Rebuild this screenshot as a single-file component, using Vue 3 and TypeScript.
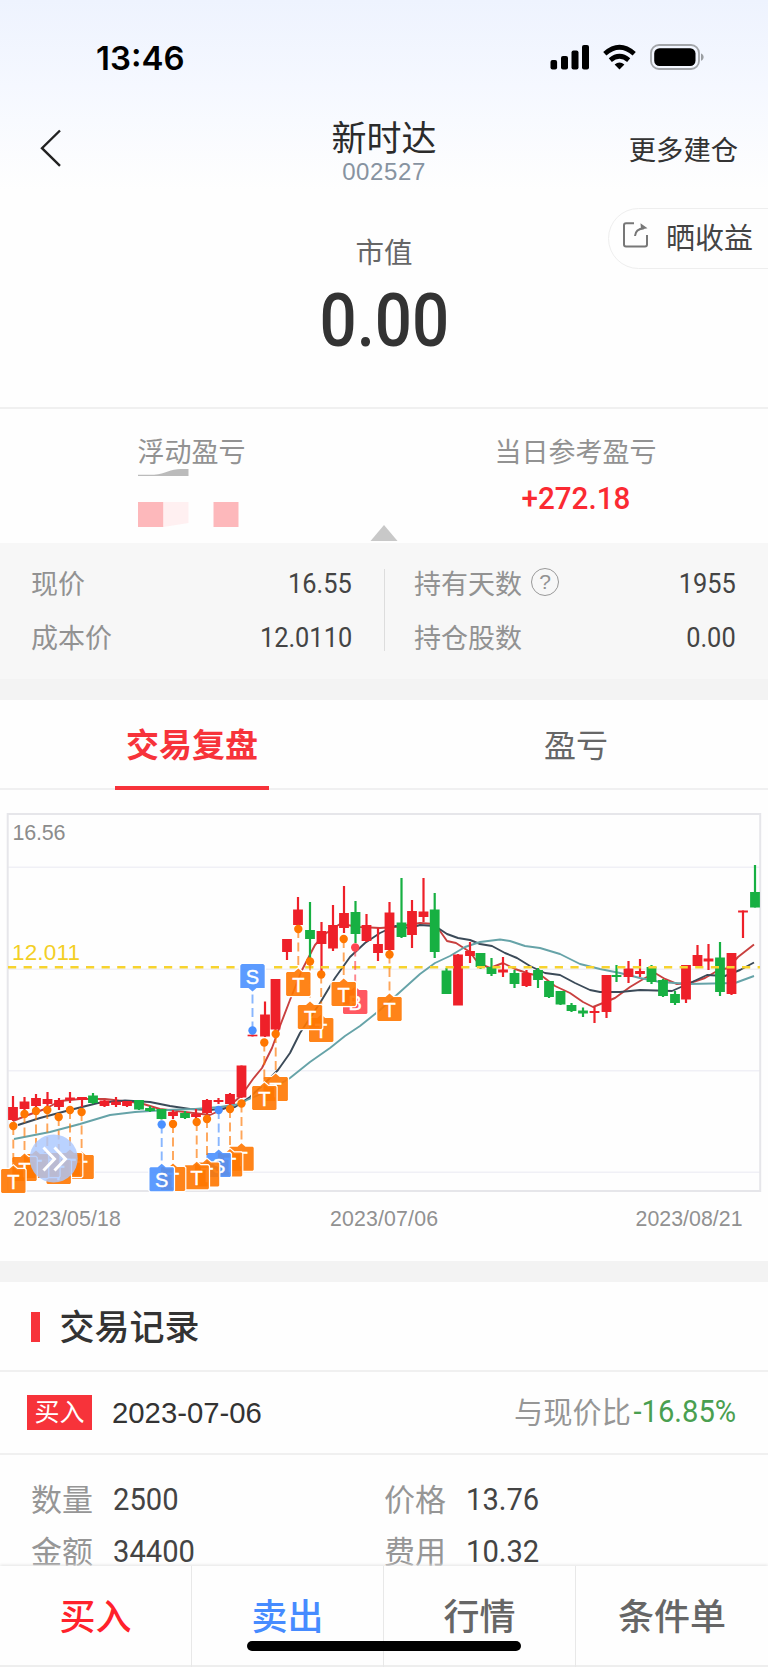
<script setup lang="ts">
type Candle = [x: number, high: number, low: number, top: number, bottom: number, up: 0 | 1]
interface Marker {
  x: number
  dot: number
  box: number
  kind: 'T' | 'S' | 'B'
  above?: boolean
}

const candles: Candle[] = [
  [13, 1096, 1121, 1107, 1120, 1], [24.5, 1097, 1110, 1101.5, 1109, 1], [36, 1094, 1107, 1098, 1106, 1],
  [47.5, 1092, 1107, 1099, 1104, 1], [59, 1098, 1110, 1100, 1107, 1], [70, 1092, 1103, 1097.5, 1100, 1],
  [82, 1097, 1107, 1097, 1100, 1], [93, 1093, 1104, 1095.5, 1103, 0], [104.5, 1100, 1107, 1100.5, 1106, 1],
  [116, 1097, 1107, 1101.5, 1105, 1], [127, 1101, 1107, 1101, 1106, 1], [139, 1100, 1110, 1100, 1109.5, 0],
  [150, 1106, 1112, 1108, 1111, 0], [161.5, 1109, 1119.5, 1109, 1119, 0], [173, 1110, 1119, 1112, 1116, 1],
  [185, 1111, 1119, 1113, 1118, 0], [196, 1109, 1118, 1114, 1117, 1], [207, 1099, 1114, 1100, 1113, 1],
  [218.5, 1098, 1104, 1100, 1102, 1], [230, 1093, 1105, 1094, 1104, 1], [241.5, 1065.5, 1098, 1065.5, 1097.5, 1],
  [252.5, 1034.5, 1036.5, 1034.7, 1036.3, 1], [265, 1001.5, 1037, 1014.5, 1036.5, 1], [275.5, 979, 1030, 979, 1029.5, 1],
  [287, 939, 960, 939, 952, 1], [298, 897, 926, 909.5, 925, 1], [310, 902, 960, 930, 939, 0],
  [321.5, 922, 975, 931, 944, 1], [333, 905, 951, 925, 948.5, 1], [344, 886, 933, 913, 928, 1],
  [355.5, 901, 943, 912, 934, 0], [366.5, 914, 942, 925, 941, 1], [378, 928, 961, 944, 953, 1],
  [389.5, 902, 951, 912.5, 950, 1], [401.5, 878, 938, 922.5, 937, 0], [412, 900, 948, 911, 935, 1],
  [423.5, 878, 922, 911.5, 917, 1], [434.7, 893, 958, 909.5, 952, 0], [446.5, 968, 994, 970.5, 994, 0],
  [458, 954, 1005, 954.5, 1005.5, 1], [470, 942, 963, 951, 956, 1], [480.5, 953, 969, 953, 967, 0],
  [491.5, 958, 976, 967, 974, 0], [503, 957, 977, 969.5, 972.5, 1], [514.5, 970, 988, 973, 984, 0],
  [526.5, 970, 987, 973, 986, 1], [538, 968, 988, 970, 980, 0], [549, 981, 998, 981, 997, 0],
  [560.5, 991, 1005, 991, 1004.5, 0], [571.5, 1003, 1012, 1005, 1011, 0], [583, 1007.5, 1017, 1010.5, 1013.5, 0],
  [594.5, 1007, 1023, 1011, 1013, 1], [606.5, 975, 1018, 975, 1012, 1], [616.5, 965, 982, 975, 977, 0],
  [628.5, 961, 983, 968.5, 977, 1], [640, 959, 977, 971, 974, 1], [651.5, 965, 984, 967, 982, 0],
  [663, 979, 997, 980, 996, 0], [675, 991, 1005, 994, 1003, 0], [686, 965, 1003, 965, 999.5, 1],
  [697.5, 945, 966, 955, 966, 1], [708.5, 944, 970, 958.5, 961.5, 1], [720, 942, 996, 957.5, 992, 0],
  [731.5, 953, 995, 953, 994, 1], [743, 910.5, 938, 910.5, 912.5, 1], [755, 865, 907.5, 892, 907.5, 0],
]

// Right-most markers are painted first, so each one overlaps its right neighbour.
const markers: Marker[] = [
  { x: 389.5, dot: 954.5, box: 1009, kind: 'T' },
  { x: 355.2, dot: 947.5, box: 1002, kind: 'B' },
  { x: 343.7, dot: 939, box: 994, kind: 'T' },
  { x: 321.2, dot: 974.5, box: 1030, kind: 'T' },
  { x: 310, dot: 961.5, box: 1017, kind: 'T' },
  { x: 298.3, dot: 929, box: 984, kind: 'T' },
  { x: 275.7, dot: 1034, box: 1089, kind: 'T' },
  { x: 264.3, dot: 1042.5, box: 1098, kind: 'T' },
  { x: 252.5, dot: 1030.5, box: 976, kind: 'S', above: true },
  { x: 241.5, dot: 1103.5, box: 1158.7, kind: 'T' },
  { x: 230, dot: 1109, box: 1164.5, kind: 'T' },
  { x: 218.7, dot: 1110, box: 1165, kind: 'S' },
  { x: 207, dot: 1119, box: 1174.5, kind: 'T' },
  { x: 196.7, dot: 1122, box: 1177.3, kind: 'T' },
  { x: 173, dot: 1124, box: 1179, kind: 'T' },
  { x: 161.7, dot: 1124.5, box: 1179.3, kind: 'S' },
  { x: 81.6, dot: 1112, box: 1167, kind: 'T' },
  { x: 70, dot: 1110, box: 1165, kind: 'T' },
  { x: 58.7, dot: 1117, box: 1172, kind: 'T' },
  { x: 47.3, dot: 1110, box: 1165, kind: 'T' },
  { x: 36, dot: 1111, box: 1166, kind: 'T' },
  { x: 24.5, dot: 1114, box: 1169, kind: 'T' },
  { x: 13.3, dot: 1126, box: 1181, kind: 'T' },
]

const colors = { T: '#ff7700', S: '#4a90ff', B: '#ff4650' }

const averages = [
  {
    color: '#c8403f',
    points:
      '13,1121 28,1115 45,1109 60,1101 80,1099 105,1099 140,1103 160,1109 185,1112 210,1115 228,1107 241,1096 253,1079 262,1068 272,1048 280,1026 290,1000 302,970 315,945 325,934 340,924 360,927 380,928 395,927 420,923 435,924 440,931 447,941 456,943 470,952 478,963 490,968 503,963 515,969 530,974 542,976 555,986 570,993 583,1002 593,1007 603,1003 615,998 630,987 645,978 655,973 665,979 677,984 690,983 705,978 717,971 728,968 738,957 754,944.5',
  },
  {
    color: '#3b4a58',
    points:
      '18,1125 40,1118 70,1110 98,1103 125,1100.5 150,1102 170,1106 190,1109 210,1110 235,1107 250,1097 265,1083 278,1070 290,1053 300,1033 320,1003 335,978 350,957 365,943 380,933 395,926 410,928 420,925 435,926 447,934 458,938 470,940 480,944 492,946 505,953 517,958 530,966 545,973 560,975 575,983 590,990 600,992 620,992 640,990 672,991 690,983 707,975 725,976 740,970 754,962.5',
  },
  {
    color: '#66a3a8',
    points:
      '14,1139 50,1132 80,1124 110,1115 135,1112 165,1110 195,1109 220,1107 240,1104 247,1100 270,1090 290,1078 310,1062 330,1048 345,1036 360,1026 380,1010 400,992 420,974 435,963 450,956 465,947 480,942 500,939.5 510,941 525,946 540,948 560,954 580,964 600,969 620,973 640,978 660,982 690,984 735,983 754,976',
  },
]

const boxPath = (m: Marker): string => {
  const l = m.x - 12.2, r = m.x + 12.2, t = m.box - 12, b = m.box + 12
  return m.above
    ? `M${l + 1.5} ${t}H${r - 1.5}L${r} ${t + 1.5}V${b}H${m.x + 4}L${m.x} ${b + 3.5}L${m.x - 4} ${b}H${l}V${t + 1.5}Z`
    : `M${l + 1} ${t}H${m.x - 4}L${m.x} ${t - 3.5}L${m.x + 4} ${t}H${r - 1}L${r} ${t + 1}V${b - 1}L${r - 1} ${b}H${l + 1}L${l} ${b - 1}V${t + 1}Z`
}

const left = [['现价', '16.55'], ['成本价', '12.0110']]
const right = [['持有天数', '1955'], ['持仓股数', '0.00']]
const details = [['数量', '2500'], ['价格', '13.76'], ['金额', '34400'], ['费用', '10.32']]
const actions = [
  { label: '买入', tone: 'buy' },
  { label: '卖出', tone: 'sell' },
  { label: '行情', tone: '' },
  { label: '条件单', tone: '' },
]
</script>

<template>
  <div class="screen">
    <div class="top">
      <div class="status">
        <span class="time">13:46</span>
        <svg class="status-icons" width="156" height="30" viewBox="550 42 156 30">
          <rect x="550.5" y="60" width="6.6" height="9.5" rx="2" />
          <rect x="561" y="56" width="7" height="13.5" rx="2" />
          <rect x="571.5" y="50.5" width="7" height="19" rx="2" />
          <rect x="582" y="45" width="7" height="24.5" rx="2" />
          <g fill="none" stroke="#000" stroke-width="4.8">
            <path d="M604.8 53.8Q619.5 40.8 634.2 53.8" />
            <path d="M610.3 60.2Q619.5 52.5 628.7 60.2" />
          </g>
          <path d="M614.6 64.5Q619.5 60.5 624.4 64.5L619.5 69.5Z" />
          <rect x="651" y="45" width="48" height="24" rx="8" fill="none" stroke="#a3a6aa" stroke-width="1.8" />
          <rect x="654.2" y="48.2" width="41.3" height="17.8" rx="5.3" />
          <path d="M701 53.5C704.5 54.5 704.5 59.7 701 60.7Z" fill="#9b9ea2" />
        </svg>
      </div>
      <div class="nav">
        <svg class="back" width="22" height="38" viewBox="40 129 22 38">
          <path d="M60 130.5L42 148.2L60 165.8" fill="none" stroke="#222" stroke-width="2.4" />
        </svg>
        <div class="title">
          <div class="name">新时达</div>
          <div class="code">002527</div>
        </div>
        <div class="more">更多建仓</div>
      </div>
    </div>

    <div class="value-block">
      <div class="share">
        <svg width="27" height="28" viewBox="0 0 27 28" fill="none" stroke="#777" stroke-width="2">
          <path d="M12 2.3H4Q2 2.3 2 4.3V23.5Q2 25.5 4 25.5H23Q25 25.5 25 23.5V14" />
          <path d="M13 15Q13.5 8 22 7.3" />
          <path d="M18.5 2.2L25.5 7.3L19 8.5Z" fill="#777" stroke="none" />
        </svg>
        <span>晒收益</span>
      </div>
      <div class="value-label">市值</div>
      <div class="value"><span class="num">0.00</span></div>
    </div>

    <div class="pnl">
      <div class="pnl-cell masked">
        <div class="pnl-label">浮动盈亏</div>
        <svg width="110" height="62" viewBox="138 467 110 62">
          <path d="M138 474.7H154C166 474 170 469 181 469H188.5V476H138Z" fill="#bbb" />
          <path d="M138 502H163.5V527H138ZM213.5 502H238.5V527H213.5Z" fill="#fdb8bb" />
          <path d="M163.5 502H188.5V523L163.5 527Z" fill="#fff0f1" />
        </svg>
      </div>
      <div class="pnl-cell">
        <div class="pnl-label">当日参考盈亏</div>
        <div class="pnl-value"><span class="num">+272.18</span></div>
      </div>
      <svg class="caret" width="28" height="16" viewBox="0 0 28 16"><path d="M14 0L27.5 16H.5Z" fill="#c8c8c8" /></svg>
    </div>

    <div class="facts">
      <div class="facts-col">
        <div v-for="f in left" :key="f[0]" class="fact">
          <span>{{ f[0] }}</span><span class="num to-right">{{ f[1] }}</span>
        </div>
      </div>
      <div class="facts-col second">
        <div v-for="(f, i) in right" :key="f[0]" class="fact">
          <span>{{ f[0] }}</span>
          <span v-if="i === 0" class="help">?</span>
          <span class="num to-right">{{ f[1] }}</span>
        </div>
      </div>
    </div>
    <div class="band"></div>

    <div class="tabs">
      <div class="tab active"><span>交易复盘</span></div>
      <div class="tab"><span>盈亏</span></div>
    </div>

    <svg class="chart" width="768" height="471" viewBox="0 790 768 471">
      <g stroke="#f0f0f6" stroke-width="1.6">
        <path d="M8 867.3H760M8 969.2H760M8 1070.8H760M8 1172.3H760" />
      </g>
      <rect x="7.7" y="814" width="752.5" height="377" fill="none" stroke="#e6e6ea" stroke-width="2" />
      <text x="12.5" y="840" font-size="21.5" fill="#8c8c8c" textLength="53">16.56</text>
      <text x="12" y="960.3" font-size="22.5" fill="#f3cf25" textLength="68">12.011</text>
      <g fill="none" stroke-width="1.9" stroke-linejoin="round">
        <polyline v-for="a in averages" :key="a.color" :points="a.points" :stroke="a.color" />
      </g>
      <g v-for="c in candles" :key="c[0]" :fill="c[5] ? '#ee2029' : '#17b042'">
        <rect :x="c[0] - 1.1" :y="c[1]" width="2.2" :height="c[2] - c[1]" />
        <rect :x="c[0] - 4.9" :y="c[3]" width="9.8" :height="c[4] - c[3]" />
      </g>
      <path d="M8 967.2H240M274 967.2H760" stroke="#f7d32e" stroke-width="2.4" stroke-dasharray="8.2 7.4" />
      <g v-for="m in markers" :key="m.x">
        <path
          :d="`M${m.x} ${m.dot}V${m.above ? m.box + 14 : m.box - 14}`"
          :stroke="colors[m.kind]" stroke-width="1.9" stroke-dasharray="9 4.5" opacity=".65"
        />
        <path :d="boxPath(m)" fill="none" stroke="#fff" stroke-width="2.4" />
        <path :d="boxPath(m)" :fill="colors[m.kind]" opacity=".9" />
        <text :x="m.x" :y="m.box + 7.5" text-anchor="middle" font-size="20" fill="#fff" stroke="#fff" stroke-width=".4">{{ m.kind }}</text>
        <circle :cx="m.x" :cy="m.dot" r="4.2" :fill="colors[m.kind]" />
      </g>
      <circle cx="53.7" cy="1158.5" r="24" fill="#abc8ff" opacity=".82" />
      <path d="M43.5 1147.5L54.5 1159L43.5 1170.5M54.5 1147.5L65.5 1159L54.5 1170.5" fill="none" stroke="#fff" stroke-width="3" />
      <g font-size="21.3" fill="#919191">
        <text x="13.3" y="1226" textLength="107.5">2023/05/18</text>
        <text x="330" y="1226" textLength="108">2023/07/06</text>
        <text x="635.5" y="1226" textLength="107">2023/08/21</text>
      </g>
    </svg>
    <div class="band"></div>

    <div class="records-head"><span>交易记录</span></div>
    <div class="record">
      <span class="badge">买入</span>
      <span class="date">2023-07-06</span>
      <span class="compare">与现价比</span>
      <span class="num to-right ratio">-16.85%</span>
    </div>
    <div class="details">
      <div v-for="d in details" :key="d[0]" class="detail">
        <span>{{ d[0] }}</span><span class="num to-left">{{ d[1] }}</span>
      </div>
    </div>

    <div class="actions">
      <div v-for="a in actions" :key="a.label" class="action" :class="a.tone">{{ a.label }}</div>
      <div class="home"></div>
    </div>
  </div>
</template>

<style>
body {
  margin: 0;
  background: #fefefe;
}
</style>

<style scoped>
.screen {
  position: relative;
  display: flex;
  flex-direction: column;
  width: 768px;
  height: 1667px;
  overflow: hidden;
  background: #fefefe;
  color: #333;
  font-family: 'Liberation Sans', 'Noto Sans CJK SC', sans-serif;
  white-space: nowrap;
}
.screen > * {
  flex: none;
  box-sizing: border-box;
}
.num {
  display: inline-block;
  font-family: Roboto, sans-serif;
  transform: scaleX(0.94);
}
.to-right {
  transform-origin: right;
}
.to-left {
  transform-origin: left;
}
.top {
  height: 190px;
  background: linear-gradient(#eef3fe, #f5f8ff 45%, #fefefe);
}
.status {
  display: flex;
  justify-content: space-between;
  align-items: center;
  height: 114px;
  padding: 0 62px 0 96px;
}
.time {
  margin-top: 1px;
  color: #000;
  font: 600 33px Inter, sans-serif;
}
.nav {
  display: grid;
  grid-template-columns: 250px 1fr 250px;
  height: 76px;
}
.back {
  margin: 15px 0 0 40px;
}
.title {
  text-align: center;
}
.name {
  height: 44px;
  padding-top: 2px;
  color: #2b2b2b;
  font-size: 35px;
  line-height: 46px;
}
.code {
  color: #8793a1;
  font-size: 24px;
  line-height: 24px;
  letter-spacing: 0.6px;
}
.more {
  padding-right: 30px;
  font-size: 27.3px;
  line-height: 73px;
  text-align: right;
}
.value-block {
  position: relative;
  height: 219px;
  border-bottom: 2px solid #f0f0f0;
  text-align: center;
}
.share {
  position: absolute;
  top: 18px;
  right: -2px;
  display: flex;
  gap: 17px;
  box-sizing: border-box;
  width: 162px;
  height: 61px;
  padding-left: 13px;
  border: 1.5px solid #eee;
  border-radius: 31px 0 0 31px;
  color: #444;
  font-size: 29px;
  line-height: 60px;
}
.share svg {
  margin-top: 12px;
}
.value-label {
  padding-top: 43px;
  color: #666;
  font-size: 28.5px;
  line-height: 40px;
}
.value {
  margin-top: 6px;
  font-size: 74px;
  font-weight: 500;
  line-height: 84px;
}
.value .num {
  transform: scaleX(0.885);
}
.pnl {
  position: relative;
  display: grid;
  grid-template-columns: 1fr 1fr;
  height: 134px;
}
.pnl-cell {
  margin-left: -1px;
  text-align: center;
}
.pnl-label {
  padding-top: 24px;
  color: #929292;
  font-size: 27px;
  line-height: 40px;
}
.masked svg {
  display: block;
  margin: -6px 0 0 139px;
}
.pnl-value {
  color: #fb2a32;
  font-size: 31.5px;
  font-weight: 500;
  line-height: 51px;
}
.caret {
  position: absolute;
  bottom: 2px;
  left: 370px;
}
.facts {
  display: grid;
  grid-template-columns: 384px 1fr;
  height: 136px;
  padding-top: 12px;
  background: #f7f7f7;
}
.facts-col {
  padding: 0 32px 0 31px;
}
.second {
  height: 82px;
  margin-top: 14px;
  padding: 0 32px 0 29px;
  border-left: 1.5px solid #ddd;
}
.second .fact:first-child {
  margin-top: -14px;
}
.fact {
  display: flex;
  align-items: center;
  height: 54px;
  color: #929292;
  font-size: 27px;
}
.fact .num {
  margin: 4px 0 0 auto;
  color: #444;
}
.help {
  box-sizing: border-box;
  width: 28px;
  height: 28px;
  margin: -1px 0 0 9px;
  border: 1.8px solid #999;
  border-radius: 50%;
  font-size: 21px;
  line-height: 25px;
  text-align: center;
}
.band {
  height: 21px;
  background: #f3f3f3;
}
.tabs {
  display: grid;
  grid-template-columns: 1fr 1fr;
  height: 90px;
  border-bottom: 2px solid #f0f0f1;
}
.tab {
  color: #666;
  font-size: 32px;
  line-height: 92px;
  text-align: center;
}
.tab span {
  display: inline-block;
  box-sizing: border-box;
  height: 90px;
}
.active span {
  width: 154px;
  border-bottom: 4px solid #f7333a;
  color: #f7333a;
  font-size: 33px;
  font-weight: 700;
}
.chart {
  display: block;
  font-family: 'Liberation Sans', sans-serif;
}
.records-head {
  display: flex;
  align-items: center;
  gap: 20px;
  height: 90px;
  padding-left: 31px;
  border-bottom: 2px solid #f0f0f0;
  font-size: 35px;
  font-weight: 500;
}
.records-head span {
  margin-top: -3px;
}
.records-head::before {
  width: 8.5px;
  height: 30px;
  margin-top: 2px;
  background: #f7333a;
  content: '';
}
.record {
  display: flex;
  align-items: center;
  height: 83px;
  padding: 0 32px 0 27px;
  border-bottom: 2px solid #f0f0f0;
}
.badge {
  width: 65px;
  height: 35px;
  background: #f7333a;
  color: #fff;
  font-size: 25px;
  line-height: 34px;
  text-align: center;
}
.date {
  margin-left: 20px;
  font-size: 29.3px;
}
.compare {
  margin: -6px 0 0 auto;
  color: #969696;
  font-size: 29.2px;
}
.ratio {
  margin: -2px 0 0 -4px;
  color: #4a9f50;
  font-size: 31px;
}
.details {
  display: grid;
  grid-template-columns: 353px 1fr;
  grid-auto-rows: 52px;
  padding: 18px 0 0 31px;
}
.detail {
  display: flex;
  align-items: center;
  gap: 20px;
  color: #969696;
  font-size: 31px;
}
.detail > span:first-child {
  margin-top: -3px;
}
.detail .num {
  margin-top: 1px;
  color: #444;
}
.actions {
  position: absolute;
  bottom: 0;
  left: 0;
  display: grid;
  grid-template-columns: repeat(4, 1fr);
  width: 768px;
  height: 101px;
  border-bottom: 2px solid #eee;
  background: #fefefe;
  box-shadow: 0 -1px 3px #e4e4e4;
}
.action {
  border-right: 1.5px solid #e8e8e8;
  color: #666;
  font-size: 36px;
  font-weight: 500;
  line-height: 103px;
  text-align: center;
}
.action:nth-child(4) {
  border-right: 0;
}
.buy {
  color: #ff222b;
}
.sell {
  color: #468bff;
}
.home {
  position: absolute;
  bottom: 14px;
  left: 247px;
  width: 274px;
  height: 10px;
  border-radius: 5px;
  background: #000;
}
</style>
